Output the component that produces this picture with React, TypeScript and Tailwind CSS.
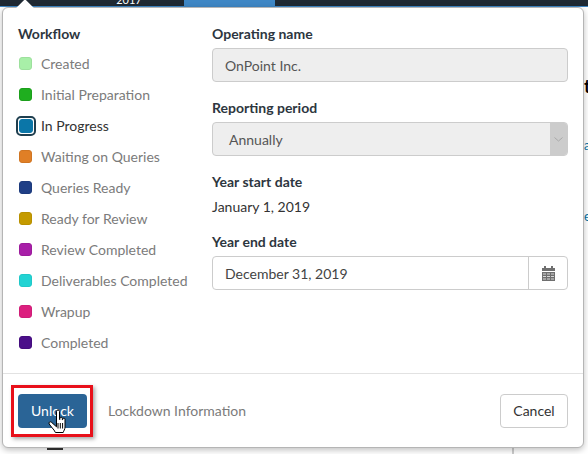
const steps = [
  { label: "Created", color: "bg-[#a8efa8] border-[#9de09d]" },
  { label: "Initial Preparation", color: "bg-[#1fae1f] border-[#1c9f1c]" },
  { label: "In Progress", color: "bg-[#0b76a8] border-[#0b76a8]", active: true },
  { label: "Waiting on Queries", color: "bg-[#e07f26] border-[#d07522]" },
  { label: "Queries Ready", color: "bg-[#1f3f86] border-[#1c3a7c]" },
  { label: "Ready for Review", color: "bg-[#c49a00] border-[#b89000]" },
  { label: "Review Completed", color: "bg-[#a81fa8] border-[#9c1c9c]" },
  { label: "Deliverables Completed", color: "bg-[#22d3d3] border-[#20c8c8]" },
  { label: "Wrapup", color: "bg-[#dc1f7f] border-[#cf1d77]" },
  { label: "Completed", color: "bg-[#4b0f8a] border-[#440d7e]" },
];

function Field({ label, children }: { label: string; children: React.ReactNode }) {
  return (
    <div>
      <div className="h-[20px] text-[14px] leading-[20px] font-bold text-[#2d3640]">{label}</div>
      {children}
    </div>
  );
}

function CalendarIcon() {
  return (
    <svg width="13" height="15" viewBox="0 0 13 15" className="text-[#6f6f6f]">
      <path d="M0 2h2V0h2v2h5V0h2v2h2v3H0Z" fill="currentColor" />
      <rect x="0" y="6" width="13" height="9" fill="currentColor" />
      <path d="M1 8h11M1 10.5h11M1 13h11" stroke="#d8d8d8" strokeWidth="1" strokeDasharray="3 1" />
    </svg>
  );
}

export default function App() {
  return (
    <div className="relative h-[454px] w-[588px] overflow-hidden bg-white font-['Lato','Open_Sans',sans-serif] text-[14px] text-[#333]">
      <div className="flex h-[7px] border-b border-[#3f87c5] bg-[#1f2933]">
        <div className="w-[184px] text-center text-[11px] leading-[5px] text-white">
          <span className="relative -top-[3px] pl-[74px]">2017</span>
        </div>
        <div className="w-[91px] bg-[#3f87c5]" />
      </div>

      {/* stuff peeking out behind the popover */}
      <span className="absolute left-[584px] top-[76px] text-[18px] font-bold leading-[20px] text-black">t</span>
      <span className="absolute left-[584px] top-[138px] text-[13px] leading-[14px] text-[#0b76a8]">a</span>
      <span className="absolute left-[584px] top-[209px] text-[13px] leading-[14px] text-[#0b76a8]">e</span>
      <div className="absolute left-[47px] top-[448px] h-[2px] w-[16px] bg-[#333]" />
      <div className="absolute left-[512px] top-[448px] h-[6px] w-[2px] bg-[#ccc]" />

      <div className="absolute left-[2px] top-[7px] flex h-[441px] w-[582px] flex-col rounded-[6px] border border-[#b5b5b5] bg-white shadow-[0_2px_6px_rgba(0,0,0,0.25)]">
        <div className="absolute -top-[7px] left-[15px] size-[14px] translate-y-[1px] rotate-45 bg-white" />
        <div className="flex flex-1 pl-[15px] pt-[16px]">
          <div className="w-[194px]">
            <div className="h-[20px] text-[14px] leading-[20px] font-bold text-[#2d3640]">Workflow</div>
            <ul className="mt-[4px]">
              {steps.map((s) => (
                <li key={s.label} className="flex h-[31px] items-center">
                  <span className="-ml-[1px] flex size-[17px] items-center justify-center">
                    {s.active ? (
                      <span className="flex size-[20px] shrink-0 items-center justify-center rounded-[5px] border-2 border-[#1f3f4f]">
                        <span className={`size-[14px] rounded-[3px] border ${s.color}`} />
                      </span>
                    ) : (
                      <span className={`size-[13px] rounded-[3px] border ${s.color}`} />
                    )}
                  </span>
                  <span className={`ml-[7px] whitespace-nowrap text-[14px] ${s.active ? "text-[#333]" : "text-[#7b7b7b]"}`}>
                    {s.label}
                  </span>
                </li>
              ))}
            </ul>
          </div>

          <div className="w-[356px]">
            <Field label="Operating name">
              <div className="mt-[4px] flex h-[34px] items-center rounded-[4px] border border-[#ccc] bg-[#eee] pl-[12px] text-[#555]">
                OnPoint Inc.
              </div>
            </Field>
            <div className="mt-[16px]">
              <Field label="Reporting period">
                <div className="mt-[4px] flex h-[34px] items-center rounded-[4px] border border-[#ccc] bg-[#eee] pl-[16px] text-[#555]">
                  <span className="flex-1">Annually</span>
                  <span className="flex h-full w-[17px] items-center justify-center rounded-r-[3px] bg-[#ccc]">
                    <svg width="9" height="5" viewBox="0 0 9 5" fill="none" stroke="#a8a8a8" strokeWidth="1">
                      <path d="M0.5 0.5 4.5 4 8.5 0.5" />
                    </svg>
                  </span>
                </div>
              </Field>
            </div>
            <div className="mt-[16px]">
              <Field label="Year start date">
                <div className="mt-[5px] h-[20px] leading-[20px] text-[#333]">January 1, 2019</div>
              </Field>
            </div>
            <div className="mt-[15px]">
              <Field label="Year end date">
                <div className="mt-[4px] flex h-[34px] items-center rounded-[4px] border border-[#ccc] bg-white pl-[12px] text-[#444]">
                  <span className="flex-1">December 31, 2019</span>
                  <span className="flex h-full w-[39px] items-center justify-center border-l border-[#ccc]">
                    <CalendarIcon />
                  </span>
                </div>
              </Field>
            </div>
          </div>
        </div>

        <div className="flex h-[74px] items-center border-t border-[#e2e2e2] pl-[15px] pr-[15px]">
          <button className="h-[34px] w-[69px] rounded-[4px] bg-[#2a6496] text-[14px] text-white">Unlock</button>
          <span className="ml-[21px] flex-1 text-[14px] text-[#7b7b7b]">Lockdown Information</span>
          <button className="h-[34px] w-[68px] rounded-[4px] border border-[#ccc] bg-white text-[14px] text-[#333]">Cancel</button>
        </div>
      </div>

      {/* screenshot annotation and cursor */}
      <div className="absolute left-[11px] top-[385px] h-[52px] w-[82px] border-[3px] border-[#e8101a] shadow-[2px_2px_4px_rgba(0,0,0,0.35)]" />
      <svg className="absolute left-[48px] top-[409px]" width="20" height="25" viewBox="0 0 20 25">
        <path
          d="M8.5 2.3c0-1.8 3-1.8 3 0V10.5h.4V9.3c0-1.5 2.4-1.5 2.4 0v1.4h.4v-.6c0-1.3 2.3-1.3 2.3 0v8c0 2.4-1.3 3.5-1.8 5.4H7.4c-.6-2-2-3-3.2-4.6L1.2 15c-1-1.5 1-3 2.4-1.6l4.9 4.4Z"
          fill="#fff"
          stroke="#000"
          strokeWidth="1"
        />
        <path d="M10 14v5.5M12.3 14v5.5M14.6 14v5.5" stroke="#000" strokeWidth="1" />
      </svg>
    </div>
  );
}
